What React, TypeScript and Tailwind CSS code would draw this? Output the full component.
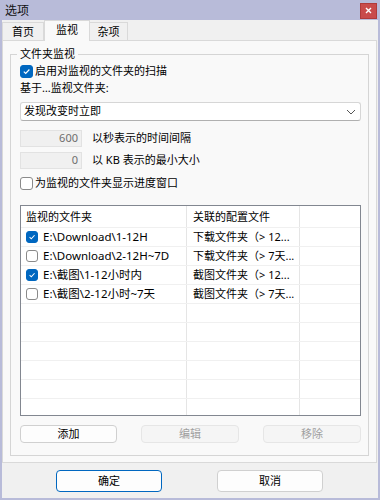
import React from "react";

const FONT = { fontFamily: '"Noto Sans", "Noto Sans CJK SC", sans-serif' };

function Check({ checked, size = 13 }: { checked: boolean; size?: number }) {
  return (
    <div
      className={
        "flex items-center justify-center rounded-[3px] shrink-0 " +
        (checked ? "bg-[#0067c0] border border-[#0067c0]" : "bg-white border border-[#8a8a8a]")
      }
      style={{ width: size, height: size }}
    >
      {checked && (
        <svg width={size - 4} height={size - 4} viewBox="0 0 10 10">
          <path d="M2 5.2 L4.1 7.2 L8.2 2.8" fill="none" stroke="white" strokeWidth="1.3" />
        </svg>
      )}
    </div>
  );
}

const rows = [
  { c: true, a: "E:\\Download\\1-12H", b: "下载文件夹（> 12..." },
  { c: false, a: "E:\\Download\\2-12H~7D", b: "下载文件夹（> 7天..." },
  { c: true, a: "E:\\截图\\1-12小时内", b: "截图文件夹（> 12..." },
  { c: false, a: "E:\\截图\\2-12小时~7天", b: "截图文件夹（> 7天..." },
  null,
  null,
  null,
  null,
  null,
  null,
];

export default function App() {
  return (
    <div className="w-[380px] h-[500px] bg-[#b8bbd9] flex flex-col text-[11px] text-black" style={FONT}>
      {/* title bar */}
      <div className="h-[20px] flex items-center justify-between shrink-0">
        <span className="pl-[5px] pt-[1px] text-[12px] text-[#111]">选项</span>
        <div className="w-[17px] h-[16px] mr-[3px] mt-[1px] bg-[#c94b4b] border border-[#b03a3a] flex items-center justify-center">
          <svg width="7" height="7" viewBox="0 0 7 7">
            <path d="M1 1 L6 6 M6 1 L1 6" stroke="white" strokeWidth="1.4" />
          </svg>
        </div>
      </div>
      {/* body */}
      <div className="flex-1 mx-[2px] mb-[2px] bg-[#f0f0f0] flex flex-col">
        {/* tabs */}
        <div className="h-[20px] flex items-end shrink-0 relative z-10">
          <div className="w-[42px] h-[18px] border border-b-0 border-[#d9d9d9] bg-[#f0f0f0] flex items-center justify-center pt-[1px]">
            首页
          </div>
          <div className="w-[46px] h-[21px] border border-b-0 border-[#d9d9d9] bg-[#f9f9f9] flex items-center justify-center -mb-[1px] pb-[2px]">
            监视
          </div>
          <div className="w-[38px] h-[18px] border border-b-0 border-l-0 border-[#d9d9d9] bg-[#f0f0f0] flex items-center justify-center pt-[1px]">
            杂项
          </div>
        </div>
        {/* panel */}
        <div className="h-[423px] mr-[1px] border border-[#d9d9d9] bg-[#f9f9f9] flex flex-col shrink-0">
          <fieldset className="mx-[7px] mt-[5px] border border-[#d5d5d5] pl-[6px] pr-[7px] pb-[12px]">
            <legend className="px-[3px] leading-[16px]">文件夹监视</legend>
            <div className="pl-[3px] flex flex-col">
              <div className="h-[18px] flex items-center gap-[2px]">
                <Check checked />
                <span>启用对监视的文件夹的扫描</span>
              </div>
              <div className="h-[16px] flex items-center">基于…监视文件夹:</div>
              <div className="mt-[6px] h-[19px] bg-white border border-[#d6d6d6] border-b-[#b0b0b0] rounded-[3px] flex items-center justify-between pl-[3px] pr-[4px]">
                <span>发现改变时立即</span>
                <svg width="10" height="6" viewBox="0 0 10 6">
                  <path d="M1 1 L5 5 L9 1" fill="none" stroke="#555" strokeWidth="1" />
                </svg>
              </div>
              <div className="mt-[9px] h-[17px] flex items-center">
                <div className="w-[62px] h-[17px] bg-[#f0f0f0] border border-[#e2e2e2] flex items-center justify-end pr-[3px] text-[#6d6d6d]">
                  600
                </div>
                <span className="ml-[10px]">以秒表示的时间间隔</span>
              </div>
              <div className="mt-[5px] h-[17px] flex items-center">
                <div className="w-[62px] h-[17px] bg-[#f0f0f0] border border-[#e2e2e2] flex items-center justify-end pr-[3px] text-[#6d6d6d]">
                  0
                </div>
                <span className="ml-[10px]">以 KB 表示的最小大小</span>
              </div>
              <div className="mt-[6px] h-[16px] flex items-center gap-[2px]">
                <Check checked={false} />
                <span>为监视的文件夹显示进度窗口</span>
              </div>
              {/* list view */}
              <div className="mt-[14px] h-[211px] border border-[#828790] bg-white flex flex-col overflow-hidden">
                <div className="h-[22px] flex shrink-0 border-b border-[#f0f0f0]">
                  <div className="w-[166px] border-r border-[#e5e5e5] flex items-center pl-[5px] pt-[1px]">监视的文件夹</div>
                  <div className="w-[113px] border-r border-[#e5e5e5] flex items-center pl-[6px] pt-[1px]">关联的配置文件</div>
                  <div className="flex-1" />
                </div>
                {rows.map((r, i) => (
                  <div key={i} className="h-[19px] flex shrink-0 border-b border-[#f0f0f0]">
                    <div className="w-[166px] border-r border-[#e5e5e5] flex items-center pl-[5px] gap-[5px] whitespace-nowrap overflow-hidden">
                      {r && (
                        <>
                          <Check checked={r.c} size={12} />
                          <span className="text-[11.5px]">{r.a}</span>
                        </>
                      )}
                    </div>
                    <div className="w-[113px] border-r border-[#e5e5e5] flex items-center pl-[6px] whitespace-nowrap overflow-hidden">
                      {r && <span>{r.b}</span>}
                    </div>
                    <div className="flex-1" />
                  </div>
                ))}
              </div>
              {/* buttons */}
              <div className="mt-[9px] h-[18px] flex justify-between">
                <div className="w-[97px] h-[18px] bg-[#fdfdfd] border border-[#d0d0d0] rounded-[4px] flex items-center justify-center">
                  添加
                </div>
                <div className="w-[98px] h-[18px] bg-[#f5f5f5] border border-[#e6e6e6] rounded-[4px] flex items-center justify-center text-[#a0a0a0]">
                  编辑
                </div>
                <div className="w-[98px] h-[18px] bg-[#f5f5f5] border border-[#e6e6e6] rounded-[4px] flex items-center justify-center text-[#a0a0a0]">
                  移除
                </div>
              </div>
            </div>
          </fieldset>
        </div>
        {/* footer */}
        <div className="flex-1 flex items-start pt-[7px]">
          <div className="ml-[54px] w-[106px] h-[22px] bg-[#fdfdfd] border border-[#0067c0] rounded-[4px] flex items-center justify-center">
            确定
          </div>
          <div className="ml-[55px] w-[106px] h-[22px] bg-[#fdfdfd] border border-[#d0d0d0] rounded-[4px] flex items-center justify-center">
            取消
          </div>
        </div>
      </div>
    </div>
  );
}
